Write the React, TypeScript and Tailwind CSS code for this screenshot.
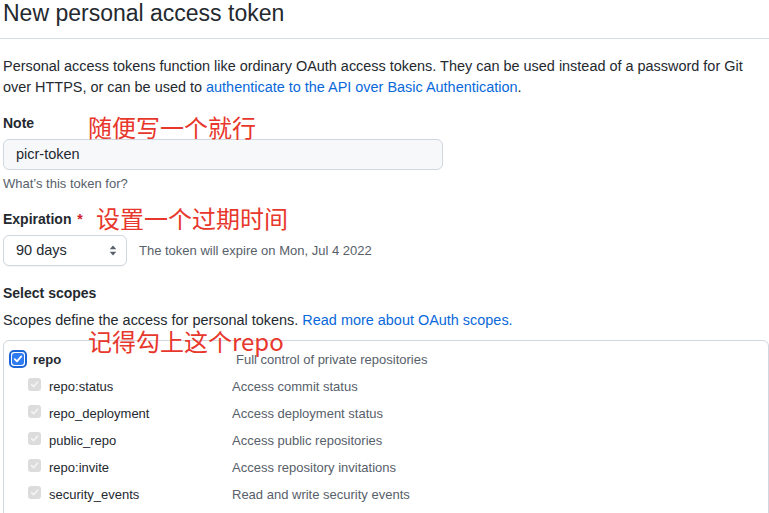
type Scope = { name: string; desc: string };

const subScopes: Scope[] = [
  { name: "repo:status", desc: "Access commit status" },
  { name: "repo_deployment", desc: "Access deployment status" },
  { name: "public_repo", desc: "Access public repositories" },
  { name: "repo:invite", desc: "Access repository invitations" },
  { name: "security_events", desc: "Read and write security events" },
];

const BlueCheck = () => (
  <span className="flex h-[18px] w-[18px] items-center justify-center rounded-[5px] border-2 border-[#1b66d6] bg-white p-[1px]">
    <span className="flex h-full w-full items-center justify-center rounded-[3px] bg-[#2f7cf0]">
      <svg width="10" height="10" viewBox="0 0 10 10" fill="none">
        <path d="M1.8 5.2 L4 7.4 L8.3 2.4" stroke="white" strokeWidth="1.8" strokeLinecap="round" strokeLinejoin="round" />
      </svg>
    </span>
  </span>
);

const GreyCheck = () => (
  <span className="flex h-[13px] w-[13px] items-center justify-center rounded-[3px] bg-[#dcdcdc]">
    <svg width="9" height="9" viewBox="0 0 10 10" fill="none">
      <path d="M1.8 5.2 L4 7.4 L8.3 2.4" stroke="#f4f4f4" strokeWidth="1.8" strokeLinecap="round" strokeLinejoin="round" />
    </svg>
  </span>
);

// up/down select arrows
const SelectArrows = () => (
  <svg width="8" height="11" viewBox="0 0 8 11" fill="#57606a">
    <path d="M4 0.5 L7.3 4.3 H0.7 Z" />
    <path d="M4 10.5 L7.3 6.7 H0.7 Z" />
  </svg>
);

const Note = ({ text, className }: { text: string; className: string }) => (
  <span
    className={
      "absolute whitespace-nowrap text-[24px] leading-[28px] text-[#e8372c] font-['Noto_Sans_CJK_SC',sans-serif] " +
      className
    }
  >
    {text}
  </span>
);

export default function App() {
  return (
    <div className="relative h-[513px] w-[769px] overflow-hidden bg-white font-['Liberation_Sans',sans-serif] text-[#24292f]">
      {/* Header */}
      <h2 className="h-[39px] border-b border-[#d8dee4] pl-[3px] text-[23px] leading-[26px] font-normal">
        New personal access token
      </h2>

      <p className="mt-[17px] pl-[3px] text-[14.45px] leading-[21px]">
        Personal access tokens function like ordinary OAuth access tokens. They can be used instead of a password for Git
        <br />
        over HTTPS, or can be used to{" "}
        <a className="text-[#0969da]">authenticate to the API over Basic Authentication</a>.
      </p>

      {/* Note */}
      <div className="mt-[15px] pl-[3px] text-[14px] leading-[20px] font-bold">Note</div>
      <div className="ml-[3px] mt-[6px] flex h-[31px] w-[440px] items-center rounded-[6px] border border-[#d0d7de] bg-[#f6f8fa] px-[12px] pt-[1px] text-[14.5px]">
        picr-token
      </div>
      <div className="mt-[5px] pl-[3px] text-[13px] leading-[18px] text-[#57606a]">What’s this token for?</div>

      {/* Expiration */}
      <div className="mt-[16px] pl-[3px] text-[14px] leading-[20px] font-bold">
        Expiration <span className="ml-[2px] text-[#cf222e]">*</span>
      </div>
      <div className="ml-[3px] mt-[6px] flex items-center gap-[12px]">
        <div className="flex h-[31px] w-[124px] items-center justify-between rounded-[6px] border border-[#d0d7de] bg-white pl-[12px] pr-[9px] text-[14.5px] shadow-[0_1px_0_rgba(27,31,36,0.04)]">
          90 days
          <SelectArrows />
        </div>
        <span className="text-[13px] text-[#57606a]">The token will expire on Mon, Jul 4 2022</span>
      </div>

      {/* Scopes */}
      <div className="mt-[17px] pl-[3px] text-[14px] leading-[20px] font-bold">Select scopes</div>
      <p className="mt-[7px] pl-[3px] text-[14.45px] leading-[21px]">
        Scopes define the access for personal tokens.{" "}
        <a className="text-[#0969da]">Read more about OAuth scopes.</a>
      </p>

      <div className="ml-[3px] mt-[9px] w-[766px] rounded-[6px] border border-[#d0d7de] pb-[20px]">
        <div className="mt-[9px] flex h-[18px] items-center pl-[5px]">
          <BlueCheck />
          <span className="ml-[6px] w-[203px] pt-[2px] text-[13px] font-bold">repo</span>
          <span className="pt-[2px] text-[13px] text-[#57606a]">Full control of private repositories</span>
        </div>
        <div className="mt-[3px]">
          {subScopes.map((s) => (
            <div key={s.name} className="flex h-[27px] items-center pl-[24px] text-[13px]">
              <GreyCheck />
              <span className="ml-[8px] w-[183px] pt-[4px]">{s.name}</span>
              <span className="pt-[4px] text-[#57606a]">{s.desc}</span>
            </div>
          ))}
        </div>
      </div>

      {/* Red annotations */}
      <Note text="随便写一个就行" className="left-[88px] top-[113px]" />
      <Note text="设置一个过期时间" className="left-[96px] top-[204px]" />
      <Note text="记得勾上这个repo" className="left-[88px] top-[327px]" />
    </div>
  );
}
